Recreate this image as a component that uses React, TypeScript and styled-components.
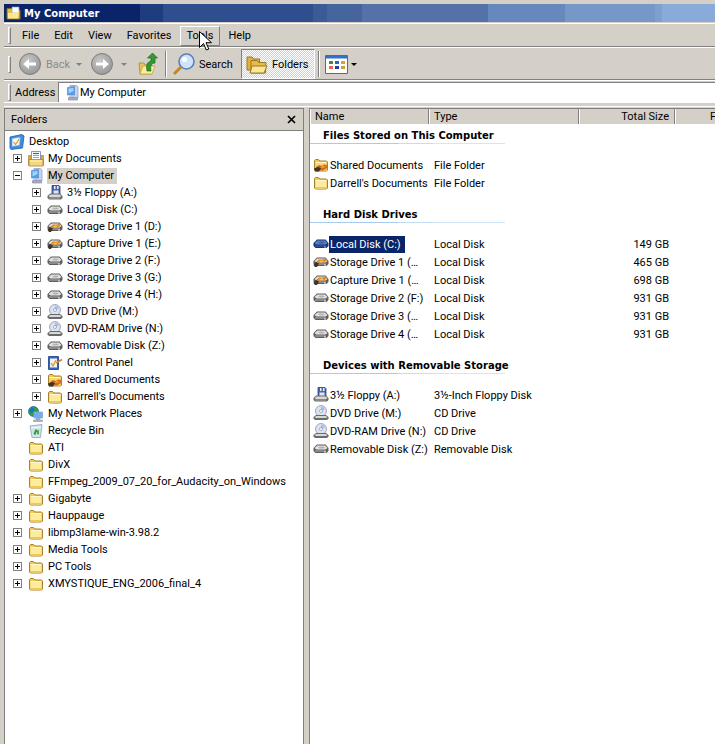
import styled, { createGlobalStyle } from 'styled-components'

const GlobalStyle = createGlobalStyle`
html, body {
    margin: 0;
    padding: 0;
    background: #d4d0c8;
}
* {
    box-sizing: border-box;
}
svg {
    flex-shrink: 0;
}
`

const FolderIcon = ({ shared = false }: { shared?: boolean }) => (
    <svg width="16" height="16" viewBox="0 0 16 16">
        <path d="M1.500 3.500l1-1h3l1.500 1.500h6.500l1 1v8l-1 1h-11l-1-1z" fill="#f2c655" stroke="#a8842c" />
        <path d="M2.500 6h11v7.500h-11z" fill={shared ? '#f7d873' : '#fdeb9e'} />
        <path d="M2.500 5.500h11" stroke="#fff8d0" />
        <path d="M2.500 12.500h11" stroke="#f0c850" />
        {shared && <path d="M3 10l3-2 3 1 2-1.500 3 .5v3l-4 2.500H4z" fill="#d2691e" />}
        {shared && <path d="M1 11.500l4-1.500 3 1-2 3.500H2z" fill="#3e3428" />}
        {shared && <path d="M7 10.500l3-1.500 3 .5-3 1.500z" fill="#f4a030" />}
    </svg>
)

const DriveIcon = ({ tone = 'grey' }: { tone?: 'grey' | 'blue' | 'shared' }) => {
    const top = tone === 'blue' ? '#5f80b8' : '#e2e2e2'
    const mid = tone === 'blue' ? '#3f62a4' : '#b4b4b4'
    const side = tone === 'blue' ? '#16357a' : '#5e5e5e'
    return (
        <svg width="16" height="16" viewBox="0 0 16 16">
            <path d="M.5 7L4 3.500h8.500L15.500 7v3l-2 2h-11l-2-2z" fill={side} />
            <path d="M1.500 7L4.500 4.500h7.500L14.500 7 12.500 8.500h-9z" fill={top} />
            <path d="M5 6.500l2-1h3l2 1-2 1H7z" fill={mid} />
            <path d="M2 10h11" stroke={mid} />
            <path d="M11 11h2" stroke={tone === 'blue' ? '#9fc0f0' : '#efefef'} />
            {tone === 'shared' && <path d="M3 8l3-2.500 3 .5 3-1.500 2 1.500-3 2.500H5z" fill="#e8861e" />}
            {tone === 'shared' && <path d="M6 7.500l3-1 2 .5-3 1.500z" fill="#f8d048" />}
            {tone === 'shared' && <path d="M.5 11l2.500-3 3 1.500-2 3.500H2z" fill="#3e3428" />}
        </svg>
    )
}

const FloppyIcon = () => (
    <svg width="16" height="16" viewBox="0 0 16 16">
        <path d="M5 .5h7l1 1v8H5z" fill="#4f66a8" stroke="#2c3c78" strokeWidth=".8" />
        <path d="M7 1h1.500v3H7zM10 1h1.500v3H10z" fill="#eef0f8" />
        <path d="M6.500 5.500h5v3.500h-5z" fill="#dfe4f2" />
        <path d="M.5 11L3 8.500h10l2.500 2.500v2l-1.500 1.500H2L.5 13z" fill="#6a6a6a" />
        <path d="M1.500 11L3.500 9.500h9l2 1.500-1.500 1H3z" fill="#d8d8d8" />
        <path d="M2 13h11" stroke="#a8a8a8" />
    </svg>
)

const DiscIcon = () => (
    <svg width="16" height="16" viewBox="0 0 16 16">
        <circle cx="8" cy="6" r="5.500" fill="#dce2f0" stroke="#8e96ac" strokeWidth=".8" />
        <path d="M8 1.500a4.500 4.500 0 0 1 4 3L8 6z" fill="#a8bcea" />
        <circle cx="8" cy="6" r="1.500" fill="#fff" stroke="#7c84a0" strokeWidth=".6" />
        <path d="M.5 12L3 10h10l2.500 2v1.500L14 15H2L.5 13.500z" fill="#6a6a6a" />
        <path d="M1.500 12L3.500 11h9l2 1-1.500 1H3z" fill="#d8d8d8" />
    </svg>
)

const ComputerIcon = () => (
    <svg width="16" height="16" viewBox="0 0 16 16">
        <path d="M6 .5h6.500l1.500 1.500v10.500l-1 1H8z" fill="#c2d4f2" stroke="#8ea4cc" strokeWidth=".8" />
        <path d="M3.500 2.500l7-1v8.500h-7z" fill="#4f9cf0" stroke="#6f8fc4" strokeWidth=".8" />
        <path d="M4.500 3.500l5-.5v3l-5 2.500z" fill="#9fd4fb" />
        <path d="M5 10.500h5V12H5z" fill="#c4c8d6" />
        <path d="M4.500 12.500h9V15h-9z" fill="#a8acbc" stroke="#7c84a0" strokeWidth=".6" />
    </svg>
)

const DocumentsIcon = () => (
    <svg width="16" height="16" viewBox="0 0 16 16">
        <path d="M.5 4.500h2.500v10H.5zM13 4.500h2.500v10H13z" fill="#e8ad3c" stroke="#a8842c" strokeWidth=".7" />
        <path d="M3.500.5h9v9h-9z" fill="#fff" stroke="#6d7fa8" strokeWidth=".8" />
        <path d="M5 2.500h6" stroke="#2f62c8" strokeWidth="1.200" />
        <path d="M5 4.500h6M5 6.500h6" stroke="#8fa3cc" />
        <path d="M1 8.500h14v6.500H1z" fill="#f5d77e" stroke="#a8842c" strokeWidth=".8" />
        <path d="M2 10h12" stroke="#fff3c0" />
    </svg>
)

const ControlPanelIcon = () => (
    <svg width="16" height="16" viewBox="0 0 16 16">
        <path d="M1.500 1.500h10v13h-10z" fill="#2f62c8" stroke="#1c3c88" strokeWidth=".8" />
        <path d="M3 3.500h7v9H3z" fill="#eef2f8" />
        <path d="M4 8l2 3 3-6" fill="none" stroke="#d0a020" strokeWidth="1.300" />
        <path d="M9 8l6-3.500" stroke="#e8782a" strokeWidth="1.500" />
    </svg>
)

const NetworkIcon = () => (
    <svg width="16" height="16" viewBox="0 0 16 16">
        <circle cx="5.500" cy="5.500" r="5" fill="#2e9e4a" stroke="#1f6aa8" strokeWidth=".8" />
        <path d="M2 3l3-1.500 1.500 2L4 7 2 6zM7 7l2 1-1 2H6z" fill="#1f6fc0" />
        <path d="M6 6h8.500v6H6z" fill="#6cb0f0" stroke="#8ea4cc" strokeWidth=".8" />
        <path d="M8 12.500h4v1H8zM5.500 14h9v1.500h-9z" fill="#b4b8c8" stroke="#8088a0" strokeWidth=".5" />
    </svg>
)

const RecycleIcon = () => (
    <svg width="16" height="16" viewBox="0 0 16 16">
        <path d="M2 3l12-1.500-1.500 13H4z" fill="#cfe2ee" stroke="#8ea4b8" strokeWidth=".8" />
        <path d="M3 5l10-1" stroke="#ffffff" />
        <path d="M5.500 11l2-5 2 1.500 1-1 .5 4.500-2 .5 .5-2-1-.5-1 3z" fill="#2ca02c" />
    </svg>
)

const DesktopIcon = () => (
    <svg width="16" height="16" viewBox="0 0 16 16">
        <path d="M1 3l12-2.500 2 1.500-1.500 12L2 15.500 1 14z" fill="#3c8ee0" stroke="#1c5ca8" strokeWidth=".8" />
        <path d="M3 4.500l8.500-1.500-1 8.500-7.500 1z" fill="#f0f6fc" stroke="#5d9ad8" strokeWidth=".6" />
        <path d="M4.500 8l2 2.500 4-6" fill="none" stroke="#e09a20" strokeWidth="1.200" />
    </svg>
)

const iconFor = (kind: string) => {
    switch (kind) {
        case 'folder': return <FolderIcon />
        case 'shared': return <FolderIcon shared />
        case 'drive': return <DriveIcon />
        case 'sharedDrive': return <DriveIcon tone="shared" />
        case 'selectedDrive': return <DriveIcon tone="blue" />
        case 'floppy': return <FloppyIcon />
        case 'disc': return <DiscIcon />
        case 'computer': return <ComputerIcon />
        case 'documents': return <DocumentsIcon />
        case 'control': return <ControlPanelIcon />
        case 'network': return <NetworkIcon />
        case 'recycle': return <RecycleIcon />
        default: return <DesktopIcon />
    }
}

const tree = [
    { label: 'My Documents', kind: 'documents', depth: 0, mark: '+' },
    { label: 'My Computer', kind: 'computer', depth: 0, mark: '-', current: true },
    { label: '3½ Floppy (A:)', kind: 'floppy', depth: 1, mark: '+' },
    { label: 'Local Disk (C:)', kind: 'drive', depth: 1, mark: '+' },
    { label: 'Storage Drive 1 (D:)', kind: 'sharedDrive', depth: 1, mark: '+' },
    { label: 'Capture Drive 1 (E:)', kind: 'sharedDrive', depth: 1, mark: '+' },
    { label: 'Storage Drive 2 (F:)', kind: 'drive', depth: 1, mark: '+' },
    { label: 'Storage Drive 3 (G:)', kind: 'drive', depth: 1, mark: '+' },
    { label: 'Storage Drive 4 (H:)', kind: 'drive', depth: 1, mark: '+' },
    { label: 'DVD Drive (M:)', kind: 'disc', depth: 1, mark: '+' },
    { label: 'DVD-RAM Drive (N:)', kind: 'disc', depth: 1, mark: '+' },
    { label: 'Removable Disk (Z:)', kind: 'drive', depth: 1, mark: '+' },
    { label: 'Control Panel', kind: 'control', depth: 1, mark: '+' },
    { label: 'Shared Documents', kind: 'shared', depth: 1, mark: '+' },
    { label: "Darrell's Documents", kind: 'folder', depth: 1, mark: '+' },
    { label: 'My Network Places', kind: 'network', depth: 0, mark: '+' },
    { label: 'Recycle Bin', kind: 'recycle', depth: 0, mark: '' },
    { label: 'ATI', kind: 'folder', depth: 0, mark: '' },
    { label: 'DivX', kind: 'folder', depth: 0, mark: '' },
    { label: 'FFmpeg_2009_07_20_for_Audacity_on_Windows', kind: 'folder', depth: 0, mark: '' },
    { label: 'Gigabyte', kind: 'folder', depth: 0, mark: '+' },
    { label: 'Hauppauge', kind: 'folder', depth: 0, mark: '+' },
    { label: 'libmp3lame-win-3.98.2', kind: 'folder', depth: 0, mark: '+' },
    { label: 'Media Tools', kind: 'folder', depth: 0, mark: '+' },
    { label: 'PC Tools', kind: 'folder', depth: 0, mark: '+' },
    { label: 'XMYSTIQUE_ENG_2006_final_4', kind: 'folder', depth: 0, mark: '+' },
]

const groups = [
    {
        title: 'Files Stored on This Computer',
        rows: [
            { name: 'Shared Documents', kind: 'shared', type: 'File Folder', size: '' },
            { name: "Darrell's Documents", kind: 'folder', type: 'File Folder', size: '' },
        ],
    },
    {
        title: 'Hard Disk Drives',
        rows: [
            { name: 'Local Disk (C:)', kind: 'selectedDrive', type: 'Local Disk', size: '149 GB', selected: true },
            { name: 'Storage Drive 1 (…', kind: 'sharedDrive', type: 'Local Disk', size: '465 GB' },
            { name: 'Capture Drive 1 (…', kind: 'sharedDrive', type: 'Local Disk', size: '698 GB' },
            { name: 'Storage Drive 2 (F:)', kind: 'drive', type: 'Local Disk', size: '931 GB' },
            { name: 'Storage Drive 3 (…', kind: 'drive', type: 'Local Disk', size: '931 GB' },
            { name: 'Storage Drive 4 (…', kind: 'drive', type: 'Local Disk', size: '931 GB' },
        ],
    },
    {
        title: 'Devices with Removable Storage',
        rows: [
            { name: '3½ Floppy (A:)', kind: 'floppy', type: '3½-Inch Floppy Disk', size: '' },
            { name: 'DVD Drive (M:)', kind: 'disc', type: 'CD Drive', size: '' },
            { name: 'DVD-RAM Drive (N:)', kind: 'disc', type: 'CD Drive', size: '' },
            { name: 'Removable Disk (Z:)', kind: 'drive', type: 'Removable Disk', size: '' },
        ],
    },
]

const App = () => {
    return (
        <Window>
            <GlobalStyle />
            <TitleBar>
                <svg width="16" height="16" viewBox="0 0 16 16">
                    <path d="M1 3.500h5l1.500 1.500h6.500v9H1z" fill="#e9b949" stroke="#8a6a1a" />
                    <path d="M6 2h7v6H6z" fill="#fff" stroke="#7f9cc8" strokeWidth=".7" />
                    <path d="M2 8l11-1-1 6.500H2z" fill="#fbe795" />
                </svg>
                <span>My Computer</span>
            </TitleBar>
            <MenuBand>
                <Grip />
                <MenuRow>
                    <MenuItem>File</MenuItem>
                    <MenuItem>Edit</MenuItem>
                    <MenuItem>View</MenuItem>
                    <MenuItem>Favorites</MenuItem>
                    <MenuItem $hover>Tools</MenuItem>
                    <MenuItem>Help</MenuItem>
                </MenuRow>
            </MenuBand>
            <ToolBand>
                <Grip />
                <NavCircle $first>
                    <svg width="22" height="22" viewBox="0 0 22 22">
                        <path d="M17 9.500h-7V6l-6 5 6 5v-3.500h7z" fill="#fff" />
                    </svg>
                </NavCircle>
                <BackLabel>Back</BackLabel>
                <DropArrow $left={8} $grey />
                <NavCircle>
                    <svg width="22" height="22" viewBox="0 0 22 22">
                        <path d="M5 9.500h7V6l6 5-6 5v-3.500H5z" fill="#fff" />
                    </svg>
                </NavCircle>
                <DropArrow $left={8} $grey />
                <UpIcon viewBox="0 0 20 24" width="20" height="24">
                    <path d="M1 11h5l1 2h7l1 1-2 8H2z" fill="#e8c060" stroke="#b8963a" />
                    <path d="M2 22l3-8h12l-3 8z" fill="#fcec9e" stroke="#c8a44a" strokeWidth=".8" />
                    <path d="M9 19c-1-6 0-9 4-10V6H9.500L14.500 1l5 5H17v5c-4 0-5 3-4 8z" fill="#2f9a2f" stroke="#1a6a1a" strokeWidth=".7" />
                </UpIcon>
                <BandSep />
                <SearchIcon viewBox="0 0 24 24" width="24" height="24">
                    <circle cx="14.500" cy="9.500" r="7.500" fill="#cfe4fa" stroke="#5a80b8" strokeWidth="1.600" />
                    <circle cx="12.500" cy="7.500" r="2.500" fill="#fff" />
                    <path d="M9 15l-7 7" stroke="#c8862a" strokeWidth="3" />
                </SearchIcon>
                <ToolLabel>Search</ToolLabel>
                <PressedButton>
                    <svg width="22" height="20" viewBox="0 0 22 20">
                        <path d="M1 3h5l1.500 2h6v11H1z" fill="#e2b040" stroke="#9a7a22" />
                        <path d="M5 6.500h6l1.500 2H20l-.5 10.500H5z" fill="#e9b949" stroke="#9a7a22" />
                        <path d="M4 19l2-7h15l-3 7z" fill="#fbe795" stroke="#9a7a22" />
                    </svg>
                    <span>Folders</span>
                </PressedButton>
                <BandSep $left={3} />
                <ViewsIcon viewBox="0 0 23 19" width="23" height="19">
                    <path d="M.5.500h22v18H.5z" fill="#fff" stroke="#2f72c8" />
                    <path d="M.5.500h22v3H.5z" fill="#2f72c8" />
                    <path d="M4 6h4v3H4z" fill="#3c8c3c" />
                    <path d="M10 6h4v3h-4z" fill="#2f62c8" />
                    <path d="M16 6h4v3h-4z" fill="#e0a020" />
                    <path d="M4 11h4v3H4z" fill="#e06a4a" />
                    <path d="M10 11h4v3h-4z" fill="#1f3f9f" />
                    <path d="M16 11h4v3h-4z" fill="#c8a040" />
                </ViewsIcon>
                <DropArrow $left={3} />
            </ToolBand>
            <AddressBand>
                <Grip />
                <AddressLabel>Address</AddressLabel>
                <AddressField>
                    {iconFor('computer')}
                    <span>My Computer</span>
                </AddressField>
            </AddressBand>
            <Panes>
                <FolderPane>
                    <PaneHead>
                        <span>Folders</span>
                        <CloseMark viewBox="0 0 9 9" width="9" height="9">
                            <path d="M1 1l7 7M8 1L1 8" stroke="#000" strokeWidth="1.700" />
                        </CloseMark>
                    </PaneHead>
                    <TreeList>
                        <RootRow>
                            <DesktopIcon />
                            <TreeLabel>Desktop</TreeLabel>
                        </RootRow>
                        {tree.map((node) => (
                            <TreeRow key={node.label} $depth={node.depth}>
                                <Expander $hidden={!node.mark}>
                                    {node.mark && <Horizontal />}
                                    {node.mark === '+' && <Vertical />}
                                </Expander>
                                {iconFor(node.kind)}
                                <TreeLabel $current={node.current}>{node.label}</TreeLabel>
                            </TreeRow>
                        ))}
                    </TreeList>
                </FolderPane>
                <ListPane>
                    <ColumnHead>
                        <HeadCell $w={119}>Name</HeadCell>
                        <HeadCell $w={150}>Type</HeadCell>
                        <HeadCell $w={96} $right>Total Size</HeadCell>
                        <LastHead>F</LastHead>
                    </ColumnHead>
                    {groups.map((group) => (
                        <Group key={group.title}>
                            <GroupTitle>{group.title}</GroupTitle>
                            {group.rows.map((row) => (
                                <ListRow key={row.name}>
                                    <NameCell>
                                        {iconFor(row.kind)}
                                        <NameText $selected={row.selected}>{row.name}</NameText>
                                    </NameCell>
                                    <TypeCell>{row.type}</TypeCell>
                                    <SizeCell>{row.size}</SizeCell>
                                </ListRow>
                            ))}
                        </Group>
                    ))}
                </ListPane>
            </Panes>
            <Cursor viewBox="0 0 13 21" width="13" height="21">
                <path d="M.5.500v16l4-4 2.800 6.500 2.500-1-2.800-6.300h5.500z" fill="#fff" stroke="#000" />
            </Cursor>
        </Window>
    )
}

export default App

const Window = styled.div`
width: 715px;
height: 744px;
position: relative;
overflow: hidden;
display: flex;
flex-direction: column;
padding-top: 4px;
background-color: #d4d0c8;
font-family: Roboto, Tahoma, sans-serif;
font-size: 11px;
color: #000;
`

const TitleBar = styled.div`
height: 18px;
margin-left: 4px;
flex-shrink: 0;
display: flex;
align-items: center;
gap: 2px;
padding-left: 2px;
color: white;
font-family: "DejaVu Sans", sans-serif;
font-weight: 700;
font-size: 10px;
background: linear-gradient(90deg,
    #0a246a 0 136px, #1f3c7c 136px 159px, #2f4e8d 159px 309px, #3b5a96 309px 323px,
    #46659d 323px 358px, #5472a8 358px 484px, #6688bd 484px 561px, #7698c8 561px 651px,
    #7f9fce 651px 658px, #8aaad9 658px);
`

const Band = styled.div`
margin-left: 4px;
flex-shrink: 0;
display: flex;
align-items: center;
padding-top: 1px;
border-top: 1px solid #fff;
border-bottom: 1px solid #808080;
`

const MenuBand = styled(Band)`
height: 24px;
margin-top: 1px;
`

const ToolBand = styled(Band)`
height: 33px;
`

const AddressBand = styled(Band)`
height: 23px;
border-bottom: 1px solid #fff;
`

const Grip = styled.div`
width: 3px;
height: 17px;
margin-left: 4px;
flex-shrink: 0;
border-top: 1px solid #fff;
border-left: 1px solid #fff;
border-right: 1px solid #808080;
border-bottom: 1px solid #808080;
`

const MenuRow = styled.div`
display: flex;
gap: 1px;
margin-left: 4px;
`

const MenuItem = styled.div<{ $hover?: boolean }>`
height: 20px;
padding: 0 6px;
display: flex;
align-items: center;
border: 1px solid;
border-color: ${(p) => (p.$hover ? '#fff #808080 #808080 #fff' : 'transparent')};
`

const NavCircle = styled.div<{ $first?: boolean }>`
width: 22px;
height: 22px;
margin-left: ${(p) => (p.$first ? '8px' : '9px')};
border-radius: 50%;
background: radial-gradient(circle at 40% 35%, #c8c8c8, #8c8c8c);
border: 1px solid #7c7c7c;
flex-shrink: 0;
svg {
    display: block;
    margin: -1px;
}
`

const BackLabel = styled.span`
margin-left: 5px;
width: 22px;
color: #8a8a8a;
white-space: nowrap;
`

const DropArrow = styled.div<{ $left: number; $grey?: boolean }>`
margin-left: ${(p) => p.$left}px;
width: 0;
height: 0;
flex-shrink: 0;
border-left: 3px solid transparent;
border-right: 3px solid transparent;
border-top: 3px solid ${(p) => (p.$grey ? '#808080' : '#000')};
`

const UpIcon = styled.svg`
margin-left: 11px;
`

const BandSep = styled.div<{ $left?: number }>`
width: 2px;
height: 26px;
margin-left: ${(p) => p.$left ?? 7}px;
border-left: 1px solid #808080;
border-right: 1px solid #fff;
flex-shrink: 0;
`

const SearchIcon = styled.svg`
margin-left: 5px;
`

const ToolLabel = styled.span`
margin-left: 3px;
width: 42px;
`

const PressedButton = styled.div`
width: 74px;
height: 30px;
flex-shrink: 0;
display: flex;
align-items: center;
gap: 4px;
padding-left: 4px;
border: 1px solid;
border-color: #808080 #fff #fff #808080;
background-color: #fff;
background-image: repeating-conic-gradient(#d4d0c8 0 25%, #fff 0 50%);
background-size: 2px 2px;
`

const ViewsIcon = styled.svg`
margin-left: 5px;
`

const AddressLabel = styled.span`
margin-left: 4px;
width: 40px;
`

const AddressField = styled.div`
flex: 1;
height: 20px;
margin-left: 3px;
display: flex;
align-items: center;
padding-left: 5px;
background: white;
border-top: 1px solid #808080;
border-left: 1px solid #808080;
`

const Panes = styled.div`
flex: 1;
min-height: 0;
display: flex;
margin-top: 3px;
margin-left: 4px;
border-top: 1px solid #fff;
`

const FolderPane = styled.div`
width: 300px;
display: flex;
flex-direction: column;
margin-top: 1px;
background: white;
border-left: 1px solid #808080;
border-top: 1px solid #808080;
border-right: 1px solid #808080;
`

const PaneHead = styled.div`
height: 22px;
flex-shrink: 0;
display: flex;
align-items: center;
justify-content: space-between;
padding: 0 7px 0 6px;
background: #d4d0c8;
border-bottom: 1px solid #808080;
`

const CloseMark = styled.svg`
display: block;
`

const TreeList = styled.div`
padding-top: 2px;
`

const RootRow = styled.div`
height: 17px;
display: flex;
align-items: center;
gap: 3px;
padding-left: 4px;
`

const TreeRow = styled.div<{ $depth: number }>`
height: 17px;
display: flex;
align-items: center;
gap: 3px;
padding-left: ${(p) => 8 + p.$depth * 19}px;
`

const Expander = styled.div<{ $hidden: boolean }>`
width: 9px;
height: 9px;
margin-right: 3px;
position: relative;
flex-shrink: 0;
border: 1px solid ${(p) => (p.$hidden ? 'transparent' : '#808080')};
`

const Horizontal = styled.i`
position: absolute;
left: 1px;
top: 3px;
width: 5px;
height: 1px;
background: #000;
`

const Vertical = styled.i`
position: absolute;
left: 3px;
top: 1px;
width: 1px;
height: 5px;
background: #000;
`

const TreeLabel = styled.span<{ $current?: boolean }>`
height: 16px;
line-height: 16px;
padding: 0 ${(p) => (p.$current ? '3px' : '1px')} 0 1px;
white-space: nowrap;
background: ${(p) => (p.$current ? '#d4d0c8' : 'transparent')};
`

const ListPane = styled.div`
flex: 1;
min-width: 0;
margin-left: 5px;
margin-top: 1px;
background: white;
border-left: 1px solid #808080;
border-top: 1px solid #808080;
overflow: hidden;
`

const ColumnHead = styled.div`
height: 15px;
display: flex;
background: #d4d0c8;
`

const HeadCell = styled.div<{ $w: number; $right?: boolean }>`
width: ${(p) => p.$w}px;
flex-shrink: 0;
padding: 0 5px 0 4px;
line-height: 15px;
white-space: nowrap;
overflow: hidden;
text-align: ${(p) => (p.$right ? 'right' : 'left')};
border-left: 1px solid #fff;
border-right: 1px solid #808080;
`

const LastHead = styled(HeadCell).attrs({ $w: 40 })`
padding-left: 34px;
`

const Group = styled.div`
padding-bottom: 11px;
`

const GroupTitle = styled.div`
width: 195px;
height: 20px;
line-height: 24px;
padding-left: 13px;
margin-bottom: 12px;
font-family: "DejaVu Sans", sans-serif;
font-size: 10px;
font-weight: 700;
white-space: nowrap;
border-bottom: 1px solid;
border-image: linear-gradient(90deg, #a8cbef 0 45%, #c6dcf5 45% 63%, #d2e6fa 63%) 1;
`

const ListRow = styled.div`
height: 18px;
display: grid;
grid-template-columns: 119px 150px 90px;
align-items: center;
`

const NameCell = styled.div`
display: flex;
align-items: center;
min-width: 0;
padding-left: 3px;
`

const NameText = styled.span<{ $selected?: boolean }>`
white-space: nowrap;
padding-left: 1px;
line-height: 17px;
width: ${(p) => (p.$selected ? '76px' : 'auto')};
color: ${(p) => (p.$selected ? '#fff' : '#000')};
background: ${(p) => (p.$selected ? '#0a246a' : 'transparent')};
`

const TypeCell = styled.div`
padding-left: 5px;
white-space: nowrap;
`

const SizeCell = styled.div`
text-align: right;
`

const Cursor = styled.svg`
position: absolute;
left: 199px;
top: 31px;
`
